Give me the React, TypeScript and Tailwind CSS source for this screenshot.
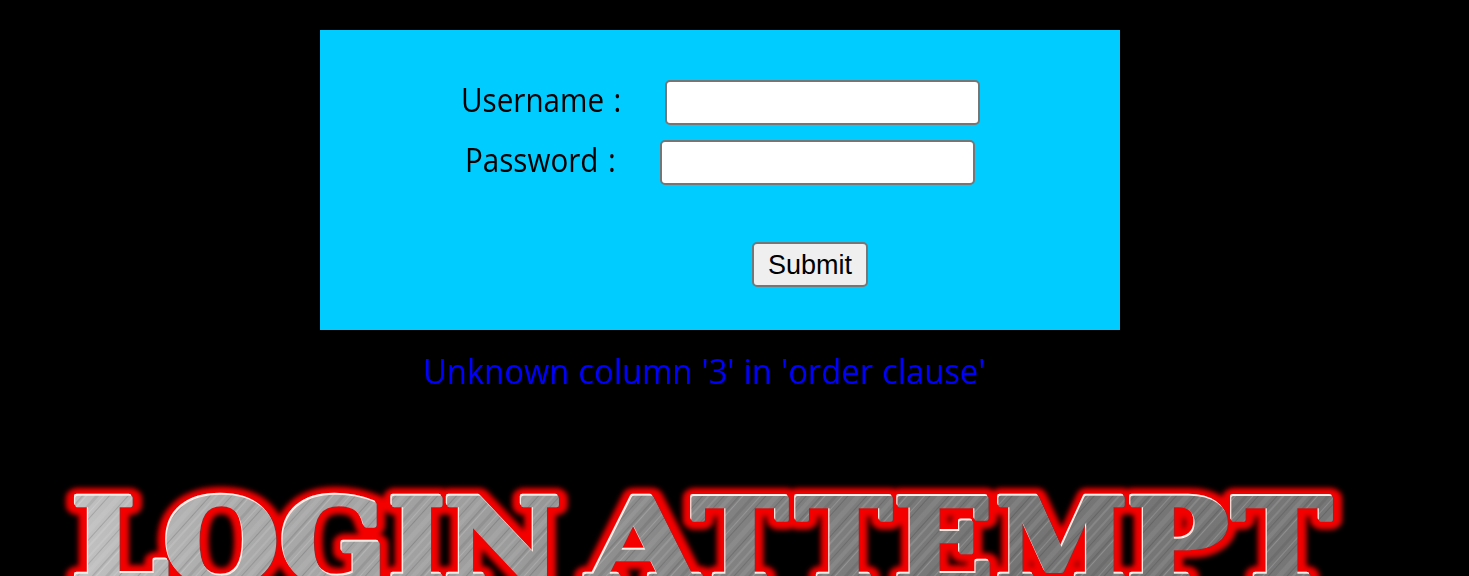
type Glyph = { char: string; left: number; right: number };

// Ink bounds of each glyph in em units.
const INK: Record<string, [number, number]> = {
  L: [0.05, 0.687],
  O: [0.038, 0.828],
  G: [0.038, 0.785],
  I: [0.05, 0.418],
  N: [0.035, 0.875],
  A: [-0.008, 0.785],
  T: [0.008, 0.736],
  E: [0.05, 0.715],
  M: [0.04, 1.062],
  P: [0.05, 0.73],
};

const TITLE: Glyph[] = [
  { char: "L", left: 76, right: 169 },
  { char: "O", left: 166, right: 276 },
  { char: "G", left: 282, right: 381 },
  { char: "I", left: 392, right: 442 },
  { char: "N", left: 446, right: 559 },
  { char: "A", left: 584, right: 702 },
  { char: "T", left: 691, right: 789 },
  { char: "T", left: 795, right: 893 },
  { char: "E", left: 898, right: 990 },
  { char: "M", left: 998, right: 1125 },
  { char: "P", left: 1131, right: 1228 },
  { char: "T", left: 1231, right: 1333 },
];

const SIZE = 125;
const EDGE = 5;

function Letters() {
  return (
    <g id="letters" strokeLinejoin="round">
      {TITLE.map(({ char, left, right }, i) => {
        const [a, b] = INK[char];
        const sx = (right - left - EDGE) / ((b - a) * SIZE);
        const x = left + EDGE / 2 - a * SIZE * sx;
        return (
          <text key={i} transform={`translate(${x} 112.5) scale(${sx} 0.925)`} fontSize={SIZE}>
            {char}
          </text>
        );
      })}
    </g>
  );
}

function Banner() {
  return (
    <svg
      className="block h-[106px] w-[1469px] shrink-0 font-['DejaVu_Serif',serif] font-bold"
      viewBox="0 0 1469 106"
    >
      <defs>
        <Letters />
        <linearGradient id="steel" x1="0" x2="1" y1="0" y2="0">
          <stop offset="0" stopColor="#c4c4c4" />
          <stop offset="0.12" stopColor="#acacac" />
          <stop offset="0.35" stopColor="#9c9c9c" />
          <stop offset="0.5" stopColor="#838383" />
          <stop offset="0.75" stopColor="#757575" />
          <stop offset="1" stopColor="#777777" />
        </linearGradient>
        <pattern id="brush" width="61" height="40" patternUnits="userSpaceOnUse" patternTransform="rotate(42)">
          <rect x="1" width="2" height="40" fill="#fff" opacity="0.1" />
          <rect x="6" width="1" height="40" fill="#000" opacity="0.12" />
          <rect x="10" width="4" height="40" fill="#fff" opacity="0.08" />
          <rect x="17" width="1.5" height="40" fill="#000" opacity="0.12" />
          <rect x="20" width="1" height="40" fill="#fff" opacity="0.18" />
          <rect x="27" width="3" height="40" fill="#000" opacity="0.08" />
          <rect x="33" width="1" height="40" fill="#fff" opacity="0.16" />
          <rect x="37" width="1" height="40" fill="#000" opacity="0.14" />
          <rect x="43" width="5" height="40" fill="#fff" opacity="0.07" />
          <rect x="51" width="1" height="40" fill="#000" opacity="0.14" />
          <rect x="55" width="2" height="40" fill="#fff" opacity="0.12" />
        </pattern>
        <filter id="glow" x="-5%" y="-20%" width="110%" height="140%">
          <feGaussianBlur stdDeviation="2.6" />
        </filter>
        <mask id="face" maskUnits="userSpaceOnUse" x="0" y="0" width="1469" height="106">
          <use href="#letters" fill="#fff" stroke="#fff" strokeWidth={EDGE} />
        </mask>
      </defs>
      <use href="#letters" fill="#f40000" stroke="#f40000" strokeWidth={EDGE + 17} filter="url(#glow)" />
      <use href="#letters" x="0.7" y="0.7" fill="#8a2a2a" stroke="#8a2a2a" strokeWidth={EDGE} />
      <use href="#letters" x="-1.3" y="-1.3" fill="#fff0ea" stroke="#fff0ea" strokeWidth={EDGE} />
      <g mask="url(#face)">
        <rect x="60" width="1280" height="106" fill="url(#steel)" />
        <rect x="60" width="1280" height="106" fill="url(#brush)" />
      </g>
    </svg>
  );
}

const inputClass =
  "h-[45px] w-[315px] rounded-[5px] border-2 border-[#767676] bg-white px-1 text-[27px] outline-none";

const labelClass = "origin-left scale-x-[0.925] leading-[40px] whitespace-pre [word-spacing:2px]";

export default function App() {
  return (
    <main className="flex h-[576px] w-[1469px] flex-col overflow-hidden bg-black pt-[30px] font-['Open_Sans','Noto_Sans',sans-serif]">
      <form
        className="ml-[320px] flex h-[300px] w-[800px] shrink-0 flex-col bg-[#00ccff] pt-[50px] text-[32px] text-black"
        onSubmit={(e) => e.preventDefault()}
      >
        <label className="flex h-[60px] items-start pl-[141px]">
          <span className={`${labelClass} w-[204px]`}>Username :</span>
          <input type="text" className={inputClass} />
        </label>
        <label className="flex h-[60px] items-start pl-[145px]">
          <span className={`${labelClass} w-[195px]`}>Password :</span>
          <input type="password" className={inputClass} />
        </label>
        <button
          type="submit"
          className="mt-[42px] ml-[432px] h-[45px] w-[116px] rounded-[5px] border-2 border-[#767676] bg-[#efefef] pt-px font-['Liberation_Sans',sans-serif] text-[27px] leading-none"
        >
          Submit
        </button>
      </form>
      <p className="mt-[17px] ml-[423px] h-[123px] w-[640px] origin-left scale-x-[0.935] text-[35px] leading-[48px] whitespace-nowrap text-[#0000ff] [word-spacing:0.6px]">
        Unknown column '3' in 'order clause'
      </p>
      <Banner />
    </main>
  );
}
